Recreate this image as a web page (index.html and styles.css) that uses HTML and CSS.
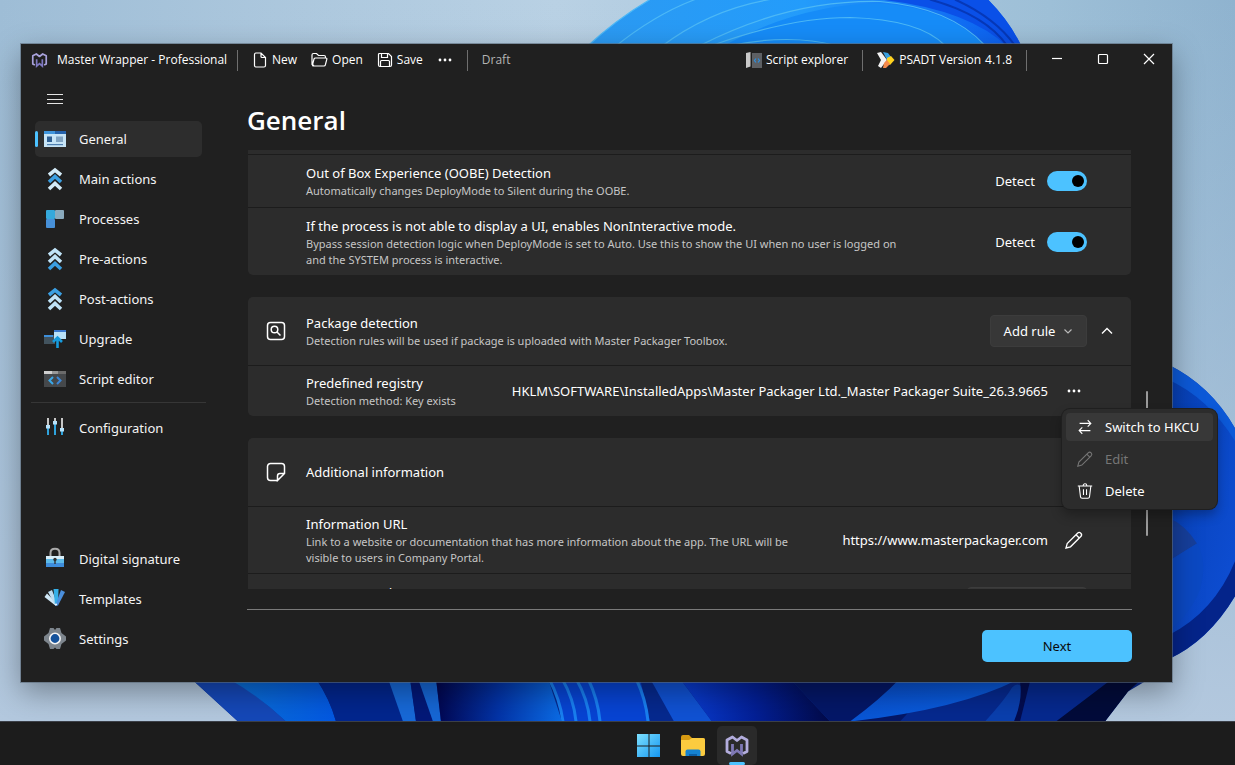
FILE: index.html
```html
<!DOCTYPE html>
<html lang="en">
<head>
<meta charset="utf-8">
<title>Master Wrapper - Professional</title>
<link rel="stylesheet" href="styles.css">
</head>
<body>
<div class="desktop">
  <svg class="wallpaper" viewBox="0 0 1235 722" preserveAspectRatio="xMidYMid slice" aria-hidden="true">
    <defs>
      <linearGradient id="sky" x1="0" y1="0" x2="1" y2="0"><stop offset="0" stop-color="#9ebdd6"/><stop offset=".45" stop-color="#b9d1e4"/><stop offset=".85" stop-color="#9dbfd7"/><stop offset="1" stop-color="#8fb3cf"/></linearGradient>
      <linearGradient id="haze" x1="0" y1="0" x2="0" y2="1"><stop offset="0" stop-color="#a9c1d8" stop-opacity="0"/><stop offset="1" stop-color="#b3c8de"/></linearGradient>
      <linearGradient id="bloom" x1="0" y1="0" x2="1" y2="0"><stop offset="0" stop-color="#2c9af2"/><stop offset=".5" stop-color="#239cfb"/><stop offset="1" stop-color="#0a5cf0"/></linearGradient>
      <linearGradient id="side" x1="0" y1="0" x2="1" y2="1"><stop offset="0" stop-color="#063fb4"/><stop offset="1" stop-color="#0f50d8"/></linearGradient>
      <linearGradient id="b1" x1="0" y1="0" x2="1" y2="0"><stop offset="0" stop-color="#0a6fd6"/><stop offset="1" stop-color="#0358e2"/></linearGradient>
      <linearGradient id="b2" x1="0" y1="0" x2="1" y2="0"><stop offset="0" stop-color="#020650"/><stop offset=".5" stop-color="#0334a8"/><stop offset="1" stop-color="#0b6ce6"/></linearGradient>
      <linearGradient id="b3" x1="0" y1="0" x2="1" y2="0"><stop offset="0" stop-color="#0a3ed4"/><stop offset=".5" stop-color="#031f96"/><stop offset="1" stop-color="#020a48"/></linearGradient>
      <linearGradient id="b4" x1="0" y1="0" x2="1" y2="1"><stop offset="0" stop-color="#084cc8"/><stop offset="1" stop-color="#0a62e6"/></linearGradient>
    </defs>
    <rect width="1235" height="722" fill="url(#sky)"/>
    <rect width="1235" height="722" fill="url(#haze)"/>
    <path d="M586 48Q616 20 650 0H988Q1010 22 1022 48Z" fill="url(#bloom)"/>
    <path d="M880 0H988Q1010 22 1022 48H1008Q970 10 880 0Z" fill="#0a50e8"/>
    <path d="M720 48Q800 4 880 4Q950 8 986 48Z" fill="#168cf8"/>
    <g fill="none" stroke="#4cb8f6" stroke-width="1.200">
      <path d="M586 48Q616 20 650 0M614 48Q655 15 695 0M660 48Q710 10 770 0M700 46Q790 0 880 2Q950 8 985 46M712 46Q790 18 850 18Q920 20 945 46M730 46Q790 34 836 46"/>
    </g>
    <path d="M930 0Q985 15 1007 46M955 0Q995 18 1015 46" fill="none" stroke="#0638b8" stroke-width="2"/>
    <path d="M1168 365Q1215 388 1240 438V588Q1212 640 1168 660Z" fill="url(#side)"/>
    <path d="M1168 365Q1215 388 1240 438V450Q1212 400 1168 380Z" fill="#0c59d8"/>
    <path d="M1168 518Q1185 525 1197 544L1168 562Z" fill="#163f9c"/>
    <path d="M1168 562L1197 544Q1208 562 1200 590Q1190 615 1168 632Z" fill="#0b49c4"/>
    <path d="M1240 548Q1220 610 1168 636V660Q1212 640 1240 588Z" fill="#04248a"/>
    <path d="M191 679L238 722H1105L1128 692L1150 679Z" fill="#06298f"/>
    <path d="M191 679L238 722H286Q260 697 230 679Z" fill="#1548b8"/>
    <path d="M228 679Q260 697 286 722H336Q330 700 316 679Z" fill="url(#b1)"/>
    <path d="M316 679Q330 700 336 722H404L390 679Z" fill="#02268e"/>
    <path d="M388 679L403 722H416L410 679Z" fill="#1769d8"/>
    <path d="M410 679L416 722H433L420 679Z" fill="#031878"/>
    <path d="M418 679L433 722H441L436 679Z" fill="#1667d6"/>
    <path d="M436 679L441 722H562L548 679Z" fill="url(#b2)"/>
    <path d="M548 679Q562 700 562 722H650L640 679Z" fill="#0744d4"/>
    <path d="M549 679Q560 700 563 722M562 679Q574 700 576 722M576 679Q588 700 590 722M588 679Q598 700 600 722M636 679Q646 700 648 722" stroke="#1980f2" stroke-width="3" fill="none"/>
    <path d="M650 679L674 722H712L680 679Z" fill="#1052d4"/>
    <path d="M680 679L712 722H830L790 679Z" fill="url(#b3)"/>
    <path d="M790 679L830 722H900L940 679Z" fill="#041768"/>
    <path d="M850 722Q960 710 1020 679H900Q880 700 850 722Z" fill="url(#b4)"/>
    <path d="M985 722Q1005 700 1012 688Q1018 682 1022 688Q1022 705 1014 722Z" fill="#0a3fae"/>
    <path d="M1014 722Q1023 700 1020 682H1030L1020 722Z" fill="#030c50"/>
    <path d="M1056 722L1110 681H1140L1128 692L1105 722Z" fill="#020b3a"/>
  </svg>

  <section class="window" aria-label="Master Wrapper">
    <header class="titlebar">
      <svg class="brand" viewBox="0 0 24 22" aria-hidden="true"><path d="M8 10V19.500L12 16L16 19.500V10" fill="none" stroke="#7f79c2" stroke-width="2.400"/><path d="M5.500 18L2.500 16.500V5L7.500 2.500L12 6L16.500 2.500L21.500 5V16.500L18.500 18" fill="none" stroke="#a9a2dc" stroke-width="2.400" stroke-linejoin="round"/></svg>
      <span class="app-name">Master Wrapper - Professional</span>
      <span class="rule"></span>
      <button class="tool"><svg width="16" height="16" viewBox="0 0 16 16"><path d="M4 1H9L13.500 5.500V13.500A1.500 1.500 0 0 1 12 15H4A1.500 1.500 0 0 1 2.500 13.500V2.500A1.500 1.500 0 0 1 4 1ZM9 1V4.500A1 1 0 0 0 10 5.500H13.500"/></svg>New</button>
      <button class="tool open"><svg width="17" height="16" viewBox="0 0 17 16"><path d="M3 13.500L1 12.500V3A1.500 1.500 0 0 1 2.500 1.500H5.500L7.500 3.500H13A1.500 1.500 0 0 1 14.500 5V6M4.500 6H14.700Q16.200 6 15.800 7.300L14.300 13Q14 14 13 14H2.500Q1.200 14 1.500 12.800L3 7Q3.300 6 4.500 6Z"/></svg>Open</button>
      <button class="tool save"><svg width="16" height="16" viewBox="0 0 16 16"><path d="M2.500 1.500H11.500L14.500 4.500V13A1.500 1.500 0 0 1 13 14.500H3A1.500 1.500 0 0 1 1.500 13V2.500A1 1 0 0 1 2.500 1.500ZM4.500 1.500V5.500H10.500V1.500M3.500 14.500V9.500A1 1 0 0 1 4.500 8.500H11.500A1 1 0 0 1 12.500 9.500V14.500"/></svg>Save</button>
      <button class="tool dots" aria-label="More"><svg width="16" height="16" viewBox="0 0 16 16"><g fill="#fff" stroke="none"><circle cx="3" cy="8" r="1.400"/><circle cx="8" cy="8" r="1.400"/><circle cx="13" cy="8" r="1.400"/></g></svg></button>
      <span class="rule"></span>
      <span class="draft">Draft</span>
      <span class="spacer"></span>
      <button class="tool explorer"><svg width="16" height="18" viewBox="0 0 16 18"><path d="M6 2H16V17H6Z" fill="#5d6064" stroke="none"/><path d="M0 2L4.500 1V15.500L0 17Z" fill="#c9c9c9" stroke="none"/><path d="M10 7.500L8.500 9.500L10 11.500M12 7.500L13.500 9.500L12 11.500" stroke="#2d8fe0"/></svg>Script explorer</button>
      <span class="rule"></span>
      <button class="tool psadt"><svg width="18" height="18" viewBox="0 0 18 18"><g stroke="none"><path d="M0 2L4 1L10 9L4 17L1 15L4 9Z" fill="#f3f3f3"/><path d="M6 1L11 2L14 6L10 9Z" fill="#3aa0e0"/><path d="M10 7L14 5L17.500 9L13 14L10 12Z" fill="#ffd21f"/><path d="M7 12L10 9L13 13L9 17L6 17Z" fill="#f58a4b"/></g></svg>PSADT Version <span>4.1.8</span></button>
      <span class="rule last"></span>
      <button class="caption" aria-label="Minimize"><svg width="12" height="12" viewBox="0 0 12 12"><path d="M1 5.500H11"/></svg></button>
      <button class="caption" aria-label="Maximize"><svg width="12" height="12" viewBox="0 0 12 12"><rect x="1.500" y="1.500" width="9" height="9" rx="1"/></svg></button>
      <button class="caption" aria-label="Close"><svg width="12" height="12" viewBox="0 0 12 12"><path d="M1 1L11 11M11 1L1 11"/></svg></button>
    </header>

    <div class="body">
      <nav class="sidebar">
        <button class="burger" aria-label="Toggle navigation"><svg width="16" height="12" viewBox="0 0 16 12"><path d="M0 1.500H16M0 6.500H16M0 10.500H16" stroke="#e4e4e4"/></svg></button>
        <a class="item active" href="#"><svg viewBox="0 0 24 24"><path d="M1 4H23V20H1Z" fill="#c6e4f6"/><path d="M1 4H12V7H1Z" fill="#3f95dc"/><path d="M12 4H23V7H12Z" fill="#2563ad"/><path d="M4 9.500H9V15H4Z" fill="#2e5f93"/><path d="M13 9.500H20V15H13Z" fill="#7fa3c2"/><path d="M4 17H20V18.200H4Z" fill="#4e7fb0"/></svg>General</a>
        <a class="item" href="#"><svg viewBox="0 0 24 24"><g fill="none" stroke-width="3.600"><path d="M6 8L12 3L18 8M6 22L12 16.500L18 22" stroke="#d3ebf8"/><path d="M6 15L12 9.500L18 15" stroke="#3b9fe2"/></g></svg>Main actions</a>
        <a class="item" href="#"><svg viewBox="0 0 24 24"><rect x="3" y="3" width="9" height="9" rx="1" fill="#35a9dc"/><rect x="12" y="3" width="9" height="9" rx="1" fill="#8aaabd"/><rect x="3" y="12" width="9" height="9" rx="1" fill="#4790d8"/></svg>Processes</a>
        <a class="item" href="#"><svg viewBox="0 0 24 24"><g fill="none" stroke-width="3.600"><path d="M6 8L12 3L18 8M6 15L12 9.500L18 15" stroke="#bfe3f8"/><path d="M6 22L12 16.500L18 22" stroke="#3b9fe2"/></g></svg>Pre-actions</a>
        <a class="item" href="#"><svg viewBox="0 0 24 24"><g fill="none" stroke-width="3.600"><path d="M6 8L12 3L18 8" stroke="#3b9fe2"/><path d="M6 15L12 9.500L18 15M6 22L12 16.500L18 22" stroke="#bfe3f8"/></g></svg>Post-actions</a>
        <a class="item" href="#"><svg viewBox="0 0 24 24"><path d="M1 8H12V17H1Z" fill="#42535e"/><path d="M1 8H10V10H1Z" fill="#3d8fdc"/><path d="M11 3H23V12H11Z" fill="#b9e1f8"/><path d="M11 3H23V5H11Z" fill="#3a78ce"/><path d="M14.500 21V11M10 15L14.500 10.500L19 15" stroke="#169bdd" stroke-width="2.600" fill="none"/></svg>Upgrade</a>
        <a class="item" href="#"><svg viewBox="0 0 24 24"><path d="M1 4H23V20H1Z" fill="#45484b"/><path d="M1 4H9V7H1Z" fill="#cfcfcf"/><path d="M9 4H15V7H9Z" fill="#989898"/><path d="M15 4H23V7H15Z" fill="#6b6b6b"/><path d="M10 10L6.500 13.500L10 17" stroke="#3aa9ea" stroke-width="2" fill="none"/><path d="M14 10L17.500 13.500L14 17" stroke="#3b87d8" stroke-width="2" fill="none"/></svg>Script editor</a>
        <div class="sep"></div>
        <a class="item" href="#"><svg viewBox="0 0 24 24"><path d="M5 2V11M12 2V7M19 2V13" stroke="#c7c7c7" stroke-width="2"/><path d="M5 11V19M12 7V19M19 14V19" stroke="#2ea3dd" stroke-width="2"/><path d="M3 9H7V12.500H3ZM10 5H14V8.500H10ZM17 12H21V15.500H17Z" fill="#b7e2fa"/></svg>Configuration</a>
        <span class="spacer"></span>
        <a class="item" href="#"><svg viewBox="0 0 24 24"><path d="M7.500 11V6Q7.500 1.700 12 1.700T16.500 6V11" stroke="#aaa" stroke-width="2" fill="none"/><path d="M3 9H21V20H3Z" fill="#d9effa"/><path d="M3 12H21V16H3Z" fill="#5dbbea"/><path d="M3 16H21V20H3Z" fill="#3e8ddb"/><circle cx="12" cy="12.500" r="1.700" fill="#333"/><path d="M11.300 13H12.700V17H11.300Z" fill="#333"/></svg>Digital signature</a>
        <a class="item" href="#"><svg viewBox="0 0 24 24"><path d="M1.500 10L4 6.500L13 15.500L13 19Z" fill="#d0e8f6"/><path d="M5 5L9 3L14 16L12 18Z" fill="#bcdcf0"/><path d="M10.500 2H15.500L15 18H12Z" fill="#35b0e8"/><path d="M18 3L22 5L15 18.500L12 19Z" fill="#4b8fdc"/><circle cx="13" cy="17.500" r="1" fill="#fff"/></svg>Templates</a>
        <a class="item" href="#"><svg viewBox="0 0 24 24"><path d="M7 1H10.500L12 3L13.500 1H17L18.500 6L23 9.500V13.500L18.500 17L17 22H13.500L12 20.500L10.500 22H7L5.500 17L1 13.500V9.500L5.500 6Z" fill="#7d858d"/><circle cx="12" cy="11.500" r="5.200" fill="#15529b" stroke="#f4f4f4" stroke-width="1.600"/></svg>Settings</a>
      </nav>

      <main class="main">
        <h1>General</h1>
        <div class="scroller">
          <section class="card tail">
            <div class="row stub"></div>
            <div class="row">
              <div class="copy"><h2>Out of Box Experience (OOBE) Detection</h2><p>Automatically changes DeployMode to Silent during the OOBE.</p></div>
              <label class="switch">Detect<input type="checkbox" role="switch" checked></label>
            </div>
            <div class="row tall">
              <div class="copy"><h2>If the process is not able to display a UI, enables NonInteractive mode.</h2><p>Bypass session detection logic when DeployMode is set to Auto. Use this to show the UI when no user is logged on and the SYSTEM process is interactive.</p></div>
              <label class="switch">Detect<input type="checkbox" role="switch" checked></label>
            </div>
          </section>

          <section class="card">
            <div class="row head">
              <svg class="lead" viewBox="0 0 20 20"><rect x="1.500" y="1.500" width="17" height="17" rx="3"/><circle cx="8.500" cy="8.500" r="3.300"/><path d="M11 11L14.500 14.500"/></svg>
              <div class="copy"><h2>Package detection</h2><p>Detection rules will be used if package is uploaded with Master Packager Toolbox.</p></div>
              <button class="add">Add rule<svg width="10" height="10" viewBox="0 0 10 10"><path d="M1.500 3.500L5 7L8.500 3.500"/></svg></button>
              <button class="icon-btn" aria-label="Collapse"><svg width="14" height="14" viewBox="0 0 14 14"><path d="M2 9.500L7 4.500L12 9.500" stroke-width="1.400"/></svg></button>
            </div>
            <div class="row short">
              <div class="copy"><h2>Predefined registry</h2><p>Detection method: Key exists</p></div>
              <span class="value">HKLM\SOFTWARE\InstalledApps\Master Packager Ltd._Master Packager Suite_26.3.9665</span>
              <button class="icon-btn" aria-label="Rule options"><svg width="16" height="16" viewBox="0 0 16 16"><g fill="#fff" stroke="none"><circle cx="3" cy="8" r="1.400"/><circle cx="8" cy="8" r="1.400"/><circle cx="13" cy="8" r="1.400"/></g></svg></button>
            </div>
          </section>

          <section class="card">
            <div class="row head">
              <svg class="lead" viewBox="0 0 20 20"><path d="M11.500 18.500H4.500A3 3 0 0 1 1.500 15.500V4.500A3 3 0 0 1 4.500 1.500H15.500A3 3 0 0 1 18.500 4.500V11.500L11.500 18.500V14A2.500 2.500 0 0 1 14 11.500H18.500"/></svg>
              <div class="copy"><h2>Additional information</h2></div>
            </div>
            <div class="row tall">
              <div class="copy url"><h2>Information URL</h2><p>Link to a website or documentation that has more information about the app. The URL will be visible to users in Company Portal.</p></div>
              <span class="value">https://www.masterpackager.com</span>
              <button class="icon-btn" aria-label="Edit URL"><svg width="20" height="20" viewBox="0 0 20 20"><path d="M2 18L3.200 13.500L13.500 3.200A2.300 2.300 0 0 1 16.800 6.500L6.500 16.800ZM12 4.700L15.300 8" stroke-width="1.300"/></svg></button>
            </div>
            <div class="row cut">
              <div class="copy"><h2>Image Owned</h2><p>&nbsp;</p></div>
              <button class="add wide" aria-label="Choose"></button>
            </div>
          </section>
        </div>
        <span class="thumb"></span>
        <footer><button class="next">Next</button></footer>
      </main>
    </div>
  </section>

  <div class="menu" role="menu">
    <button role="menuitem" class="hover"><svg viewBox="0 0 20 20"><path d="M4 6H16.500M13 2.500L16.500 6L13 9.500M16 14H3.500M7 10.500L3.500 14L7 17.500"/></svg>Switch to HKCU</button>
    <button role="menuitem" disabled><svg viewBox="0 0 20 20"><path d="M2 18L3.200 13.500L13.500 3.200A2.300 2.300 0 0 1 16.800 6.500L6.500 16.800ZM12 4.700L15.300 8"/></svg>Edit</button>
    <button role="menuitem"><svg viewBox="0 0 20 20"><path d="M2 4.500H18M8 4.500V4A2 2 0 0 1 12 4V4.500M3.500 4.500L5 16.500A1.800 1.800 0 0 0 6.800 18H13.200A1.800 1.800 0 0 0 15 16.500L16.500 4.500M8.300 8V14.500M11.700 8V14.500"/></svg>Delete</button>
  </div>
</div>

<footer class="taskbar">
  <button class="task" aria-label="Start"><svg width="24" height="24" viewBox="0 0 24 24"><defs><linearGradient id="win" x1="0" y1="0" x2="1" y2="1"><stop offset="0" stop-color="#7ce0ff"/><stop offset="1" stop-color="#1596f0"/></linearGradient></defs><path d="M0 0H11.500V11.500H0ZM12.500 0H23V11.500H12.500ZM0 12.500H11.500V23H0ZM12.500 12.500H23V23H12.500Z" fill="url(#win)"/></svg></button>
  <button class="task" aria-label="File Explorer"><svg width="24" height="24" viewBox="0 0 24 24"><path d="M0 3Q0 1 2 1H8L11 4H22Q24 4 24 6V10H0Z" fill="#d69a12"/><path d="M0 6H8L11 4H22Q24 4 24 6V20Q24 22 22 22H2Q0 22 0 20Z" fill="#fbcb3f"/><path d="M4.500 22V17.500Q4.500 15.500 6.500 15.500H17.500Q19.500 15.500 19.500 17.500V22Z" fill="#1582d0"/><path d="M8 20H16V22H8Z" fill="#0c5fa5"/></svg></button>
  <button class="task current" aria-label="Master Wrapper"><svg width="24" height="22" viewBox="0 0 24 22"><path d="M7.500 9V19L12 15.500L16.500 19V9" fill="none" stroke="#7e78b5" stroke-width="2.800"/><path d="M6 18.500L2 16.500V5L7.500 2L12 5.500L16.500 2L22 5V16.500L18 18.500" fill="none" stroke="#b3addd" stroke-width="2.800" stroke-linejoin="round"/></svg></button>
</footer>
</body>
</html>
```
FILE: styles.css
```css
* { box-sizing: border-box; }
body {
  margin: 0;
  min-height: 100vh;
  display: flex;
  flex-direction: column;
  background: #1c1c1c;
  color: #fff;
  font: 13px/20px "Noto Sans", "Open Sans", sans-serif;
}
button {
  font: inherit;
  color: inherit;
  background: none;
  border: 0;
  padding: 0;
  display: flex;
  align-items: center;
  justify-content: center;
}
svg { flex: none; display: block; }
h1, h2, p { margin: 0; font-weight: 400; }
.spacer { flex: 1; }

.desktop {
  position: relative;
  flex: 1;
  display: flex;
  padding: 44px 63px 39px 21px;
}
.wallpaper {
  position: absolute;
  inset: 0;
  width: 100%;
  height: 100%;
}
.window {
  position: relative;
  flex: 1;
  min-width: 0;
  display: flex;
  flex-direction: column;
  background: #202020;
  box-shadow: 0 0 0 1px rgba(90, 105, 120, .6), 0 10px 28px rgba(0, 0, 0, .35);
}

.titlebar {
  display: flex;
  align-items: center;
  height: 32px;
  padding-left: 10px;
  font-family: "Open Sans", sans-serif;
  font-size: 12px;
  white-space: nowrap;
}
.brand { width: 17px; height: 16px; margin-right: 9px; }
.app-name { flex: none; width: 166px; }
.rule { width: 1px; height: 21px; margin: 0 14px; background: #6f6f6f; }
.rule.last { margin-right: 7px; }
.tool { gap: 4px; }
.tool svg, .caption svg, .icon-btn svg, .lead, .add svg, .menu svg {
  fill: none;
  stroke: #fff;
  stroke-width: 1.2;
}
.open, .save { margin-left: 14px; }
.dots { margin-left: 14px; }
.draft { color: #b4b4b4; }
.caption { width: 46px; height: 32px; padding-bottom: 2px; }

.body { flex: 1; display: flex; min-height: 0; }
.sidebar {
  width: 185px;
  display: flex;
  flex-direction: column;
  gap: 4px;
  padding: 5px 4px 25px 14px;
}
.burger { height: 36px; width: 40px; }
.item {
  position: relative;
  display: flex;
  align-items: center;
  gap: 12px;
  height: 36px;
  padding: 0 8px;
  border-radius: 5px;
  color: #f4f4f4;
  text-decoration: none;
}
.item svg { width: 24px; height: 24px; }
.item.active { background: #2d2d2d; }
.item.active::before {
  content: "";
  position: absolute;
  left: 0;
  top: 10px;
  width: 3px;
  height: 16px;
  border-radius: 2px;
  background: #4cc2ff;
}
.sep { height: 1px; margin: 1px -4px 3px -4px; background: #363636; }

.main {
  position: relative;
  flex: 1;
  min-width: 0;
  display: flex;
  flex-direction: column;
  padding: 25px 40px 20px 41px;
}
h1 { font: 600 26px/38px "Open Sans", sans-serif; margin-bottom: 11px; }
.scroller {
  flex: 1 1 0;
  min-height: 0;
  overflow: hidden;
  padding: 0 1px;
}
.card { margin-bottom: 22px; border-radius: 5px; background: #2c2c2c; overflow: hidden; }
.card.tail { border-radius: 0 0 5px 5px; }
.row {
  display: flex;
  align-items: center;
  min-height: 53px;
  padding: 0 44px 0 58px;
  border-top: 1px solid #1c1c1c;
}
.row:first-child { border-top: 0; }
.stub { min-height: 4px; }
.tall { min-height: 67px; }
.card.tail .tall { min-height: 68px; }
.short { min-height: 51px; }
.head { min-height: 68px; padding: 0 10px 0 18px; }
.lead { width: 20px; height: 20px; margin-right: 20px; stroke-width: 1.5; }
.copy { flex: 1; min-width: 0; }
.copy p { max-width: 600px; }
.copy.url p { max-width: 514px; }
h2 { font-size: 13px; line-height: 20px; white-space: nowrap; }
p { font-size: 11px; line-height: 16px; color: #c6c6c6; }
.switch { display: flex; align-items: center; gap: 12px; }
.switch input {
  appearance: none;
  width: 40px;
  height: 20px;
  margin: 0;
  padding: 4px 3px;
  border-radius: 10px;
  background: #4cc2ff;
  display: flex;
  justify-content: flex-end;
}
.switch input::before { content: ""; width: 12px; height: 12px; border-radius: 50%; background: #000; }
.value { white-space: nowrap; }
.icon-btn { width: 26px; height: 28px; margin-left: 13px; }
.add {
  gap: 8px;
  width: 97px;
  height: 32px;
  border-radius: 4px;
  background: #373737;
  border: 1px solid #3c3c3c;
}
.add svg { stroke: #b8b8b8; }
.add + .icon-btn { width: 28px; margin-left: 6px; }
.add.wide { width: 120px; height: 28px; }
.cut { min-height: 55px; }
.thumb {
  position: absolute;
  right: 24px;
  top: 315px;
  width: 2px;
  height: 145px;
  border-radius: 1px;
  background: #9a9a9a;
}
.main footer {
  display: flex;
  justify-content: flex-end;
  margin-top: 20px;
  padding-top: 20px;
  border-top: 1px solid #7a7a7a;
}
.next { width: 150px; height: 32px; border-radius: 5px; background: #4cc2ff; color: #0a0a0a; }

.menu {
  position: absolute;
  right: 18px;
  top: 409px;
  width: 155px;
  padding: 4px;
  display: flex;
  flex-direction: column;
  gap: 4px;
  border-radius: 8px;
  background: #2c2c2c;
  box-shadow: 0 0 0 1px #1f1f1f, 0 6px 12px rgba(0, 0, 0, .3);
}
.menu button { justify-content: flex-start; gap: 11px; height: 28px; padding: 0 10px; width: 100%; border-radius: 4px; white-space: nowrap; }
.menu svg { width: 18px; height: 18px; }
.menu .hover { background: #383838; }
.menu button:disabled { color: #767676; }
.menu button:disabled svg { stroke: #767676; }

.taskbar {
  display: flex;
  justify-content: center;
  gap: 4px;
  height: 44px;
  padding: 4px 0 0 150px;
  border-top: 1px solid #3c4048;
  background: #1c1c1c;
}
.task { width: 40px; height: 39px; border-radius: 5px; }
.task.current { position: relative; background: #2a2a2a; }
.task.current::after {
  content: "";
  position: absolute;
  left: 12px;
  bottom: 0;
  width: 16px;
  height: 3px;
  border-radius: 2px;
  background: #4cc2ff;
}
```
